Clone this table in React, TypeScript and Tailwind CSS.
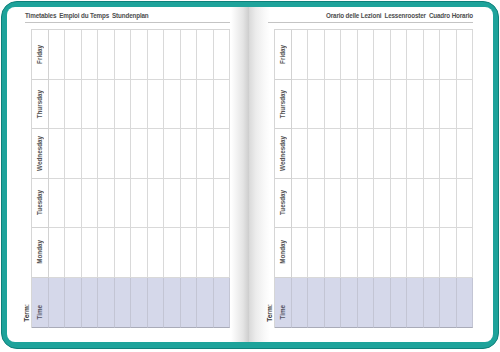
const days = ['Friday', 'Thursday', 'Wednesday', 'Tuesday', 'Monday']
const cols = Array.from({ length: 11 }, (_, i) => i)

function Grid() {
  return (
    <div className="flex">
      <div className="w-[7px] flex flex-col justify-end pb-[6px]">
        <span className="[writing-mode:vertical-rl] rotate-180 text-[6.6px] leading-[6px] font-bold text-[#3a3a3a]">
          Term:
        </span>
      </div>
      <div className="grid grid-cols-[repeat(12,16.5px)] grid-rows-[repeat(5,49.5px)_50px] border-l border-t border-[#d6d6d6]">
        {days.map((d) => (
          <div key={d} className="contents">
            <div className="border-r border-b border-[#d2d2d2] flex items-center justify-center">
              <span className="[writing-mode:vertical-rl] rotate-180 text-[6.3px] leading-[6px] font-bold text-[#555]">
                {d}
              </span>
            </div>
            {cols.map((c) => (
              <div key={c} className="border-r border-b border-[#d9d9d9]" />
            ))}
          </div>
        ))}
        <div className="bg-[#d5d8ea] border-r border-b border-r-[#c3c5d4] border-b-[#a9abb8] flex items-center justify-center pt-[20px]">
          <span className="[writing-mode:vertical-rl] rotate-180 text-[6.3px] leading-[6px] font-bold text-[#555565]">
            Time
          </span>
        </div>
        {cols.map((c) => (
          <div key={c} className="bg-[#d5d8ea] border-r border-b border-r-[#c3c5d4] border-b-[#a9abb8]" />
        ))}
      </div>
    </div>
  )
}

function Page({ side }: { side: 'left' | 'right' }) {
  const left = side === 'left'
  return (
    <div
      className={
        left
          ? 'w-[243px] h-full rounded-l-[8px] pl-[17px] pt-[5px] flex flex-col bg-[linear-gradient(to_right,#fff_0,#fff_224px,#e4e4e4_236px,#cdcdcd_242px,#e6e6e6_243px)]'
          : 'w-[243px] h-full rounded-r-[8px] pl-[17px] pt-[5px] flex flex-col bg-[linear-gradient(to_right,#dcdcdc_0,#ececec_6px,#f8f8f8_14px,#fff_20px)]'
      }
    >
      <div
        className={
          'ml-[1px] w-[205px] h-[8px] flex gap-[3px] text-[6.3px] leading-[8px] tracking-[-0.15px] font-bold text-[#4d4d4d] whitespace-nowrap ' +
          (left ? 'justify-start' : 'justify-end')
        }
      >
        {left ? (
          <>
            <span>Timetables</span>
            <span>Emploi du Temps</span>
            <span>Stundenplan</span>
          </>
        ) : (
          <>
            <span>Orario delle Lezioni</span>
            <span>Lessenrooster</span>
            <span>Cuadro Horario</span>
          </>
        )}
      </div>
      <div className="ml-[1px] w-[205px] h-[1px] mt-[2px] bg-[#c4c4c4]" />
      <div className="mt-[6px]">
        <Grid />
      </div>
    </div>
  )
}

export default function App() {
  return (
    <div className="w-[500px] h-[352px] bg-white p-[1px] pb-[3px] font-['Liberation_Sans',Arial,sans-serif]">
      <div className="h-full rounded-[16px] bg-[#1ea39b] border border-[#0f807a] px-[5px] pt-[5px] pb-[6px] flex">
        <Page side="left" />
        <Page side="right" />
      </div>
    </div>
  )
}
